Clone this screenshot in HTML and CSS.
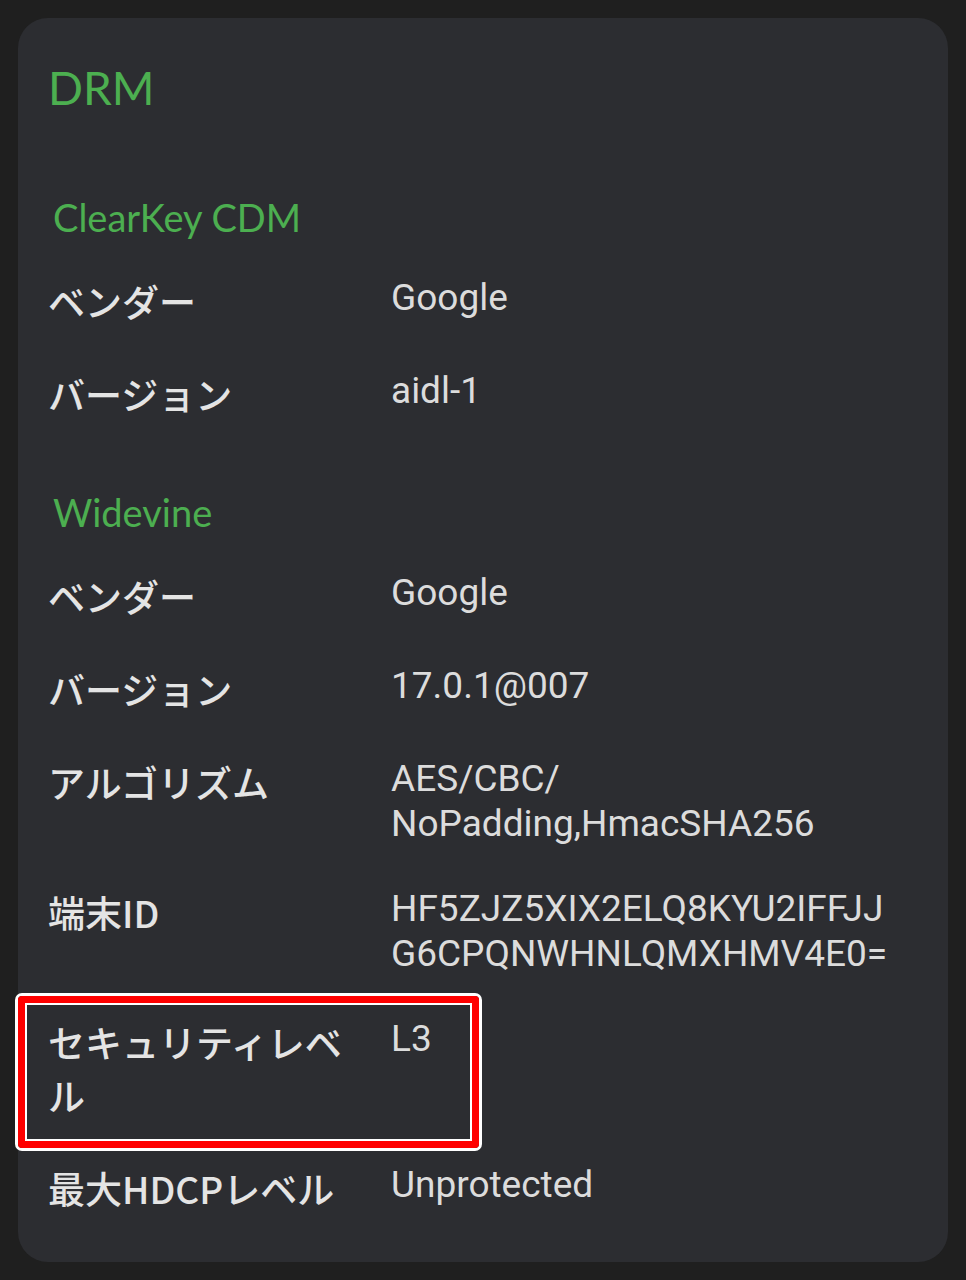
FILE: index.html
```html
<!DOCTYPE html>
<html lang="ja">
<head>
<meta charset="utf-8">
<title>DRM</title>
<link rel="stylesheet" href="styles.css">
</head>
<body>
<div class="card">
  <h1 class="title">DRM</h1>

  <section class="section">
    <h2 class="section-title">ClearKey CDM</h2>
    <div class="row"><div class="label">ベンダー</div><div class="value">Google</div></div>
    <div class="row"><div class="label">バージョン</div><div class="value">aidl-1</div></div>
  </section>

  <section class="section">
    <h2 class="section-title">Widevine</h2>
    <div class="row"><div class="label">ベンダー</div><div class="value">Google</div></div>
    <div class="row"><div class="label">バージョン</div><div class="value">17.0.1@007</div></div>
    <div class="row"><div class="label">アルゴリズム</div><div class="value">AES/CBC/<wbr>NoPadding,HmacSHA256</div></div>
    <div class="row"><div class="label">端末ID</div><div class="value">HF5ZJZ5XIX2ELQ8KYU2IFFJJG6CPQNWHNLQMXHMV4E0=</div></div>
    <div class="row row-highlighted">
      <div class="label">セキュリティレベル</div><div class="value">L3</div>
      <div class="highlight"></div>
    </div>
    <div class="row"><div class="label">最大HDCPレベル</div><div class="value">Unprotected</div></div>
  </section>
</div>
</body>
</html>
```

FILE: styles.css
```css
html, body {
  margin: 0;
  padding: 0;
  background: #1f1f1f;
}

body {
  padding: 18px 18px 18px 18px;
  font-family: "Noto Sans CJK JP", sans-serif;
}

.card {
  background: #2c2d31;
  border-radius: 30px;
  padding: 42px 40px 27px 30px;
}

.title {
  margin: 0 0 78px 0;
  font-family: "Lato", sans-serif;
  font-weight: 400;
  font-size: 46px;
  line-height: 56px;
  color: #4caf50;
}

.section {
  margin-top: 48px;
}

.title + .section {
  margin-top: 0;
}

.section-title {
  margin: 0 0 15px 5px;
  font-family: "Lato", sans-serif;
  font-weight: 400;
  font-size: 38px;
  line-height: 46px;
  color: #4caf50;
}

.row {
  display: grid;
  grid-template-columns: 315px 1fr;
  column-gap: 28px;
  align-items: start;
  padding: 20px 0;
}

.row-highlighted {
  position: relative;
}

.label {
  font-family: "Noto Sans CJK JP", sans-serif;
  font-weight: 500;
  font-size: 37px;
  line-height: 53px;
  color: #e4e4e4;
}

.value {
  font-family: "Roboto", "Noto Sans CJK JP", sans-serif;
  font-size: 37px;
  line-height: 45px;
  color: #dcdcdc;
  overflow-wrap: anywhere;
}

.highlight {
  position: absolute;
  left: -30px;
  top: 0;
  width: 461px;
  height: 152px;
  box-sizing: border-box;
  border: 7px solid #ff0000;
  border-radius: 4px;
  box-shadow: 0 0 0 3px #ffffff, inset 0 0 0 2px #ffffff;
  pointer-events: none;
}
```
